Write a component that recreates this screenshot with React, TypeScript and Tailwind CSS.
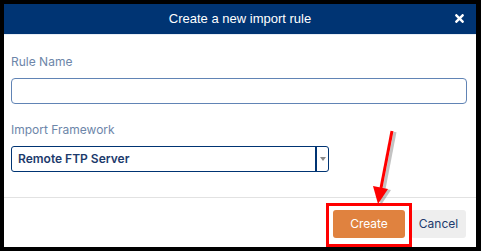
import React from 'react';
import { FaTimes } from 'react-icons/fa';

const Label: React.FC<{ text: string }> = ({ text }) => (
  <label className="block h-[20px] text-[12px] leading-[20px] text-[#6d86a9] font-[family-name:Inter,sans-serif]">{text}</label>
);

const PointerArrow: React.FC = () => (
  <svg className="absolute left-0 top-0 pointer-events-none" width="481" height="251" viewBox="0 0 481 251">
    <g opacity="0.35" fill="#555" stroke="#555">
      <line x1="395" y1="132" x2="384" y2="189" strokeWidth="3" />
      <polygon points="376,187 391,190 381,205" stroke="none" />
    </g>
    <g fill="#ff0000" stroke="#ff0000">
      <line x1="392" y1="131" x2="381" y2="188" strokeWidth="3" />
      <polygon points="373,186 388,189 378,204" stroke="none" />
    </g>
  </svg>
);

const App: React.FC = () => {
  return (
    <div className="relative w-[481px] h-[251px] bg-black pt-[4px] pl-[4px] pr-[5px] pb-[4px] overflow-hidden">
      <div className="flex flex-col w-full h-full bg-white">
        <div className="relative flex items-center justify-center h-[31px] bg-[#003473] border-b border-[#e8eef6]">
          <span className="text-white text-[13px] font-[family-name:'Liberation_Sans',Arial,sans-serif]">Create a new import rule</span>
          <FaTimes className="absolute right-[10px] top-[8px] text-white text-[13px]" />
        </div>

        <div className="flex flex-col px-[7px] pt-[17px] pb-[25px] border-b border-[#e2e2e2]">
          <Label text="Rule Name" />
          <div className="mt-[6px] h-[26px] w-[456px] rounded-[4px] border border-[#6184b5]" />

          <div className="mt-[16px]">
            <Label text="Import Framework" />
          </div>
          <div className="mt-[6px] flex h-[26px] w-[318px] rounded-[3px] border border-[#003473]">
            <div className="flex-1 flex items-center pl-[6px] text-[12px] font-semibold text-[#1c3a6c] font-[family-name:Inter,sans-serif]">
              Remote FTP Server
            </div>
            <div className="w-[13px] flex items-center justify-center border-l-2 border-[#003473]">
              <span className="block w-0 h-0 border-l-[3px] border-r-[3px] border-t-[4px] border-l-transparent border-r-transparent border-t-[#8a8a8a]" />
            </div>
          </div>
        </div>

        <div className="flex justify-end gap-[6px] pt-[12px] pr-[10px] font-[family-name:Inter,sans-serif]">
          <div className="relative">
            <button className="w-[72px] h-[28px] rounded-[3px] bg-[#e0823f] text-white text-[12px]">Create</button>
            <div className="absolute left-[-7px] top-[-7px] w-[86px] h-[44px] border-[3px] border-[#ff0000]" />
          </div>
          <button className="w-[55px] h-[28px] rounded-[3px] bg-[#eeeeee] text-[#213b6d] text-[12px]">Cancel</button>
        </div>
      </div>
      <PointerArrow />
    </div>
  );
};

export default App;
